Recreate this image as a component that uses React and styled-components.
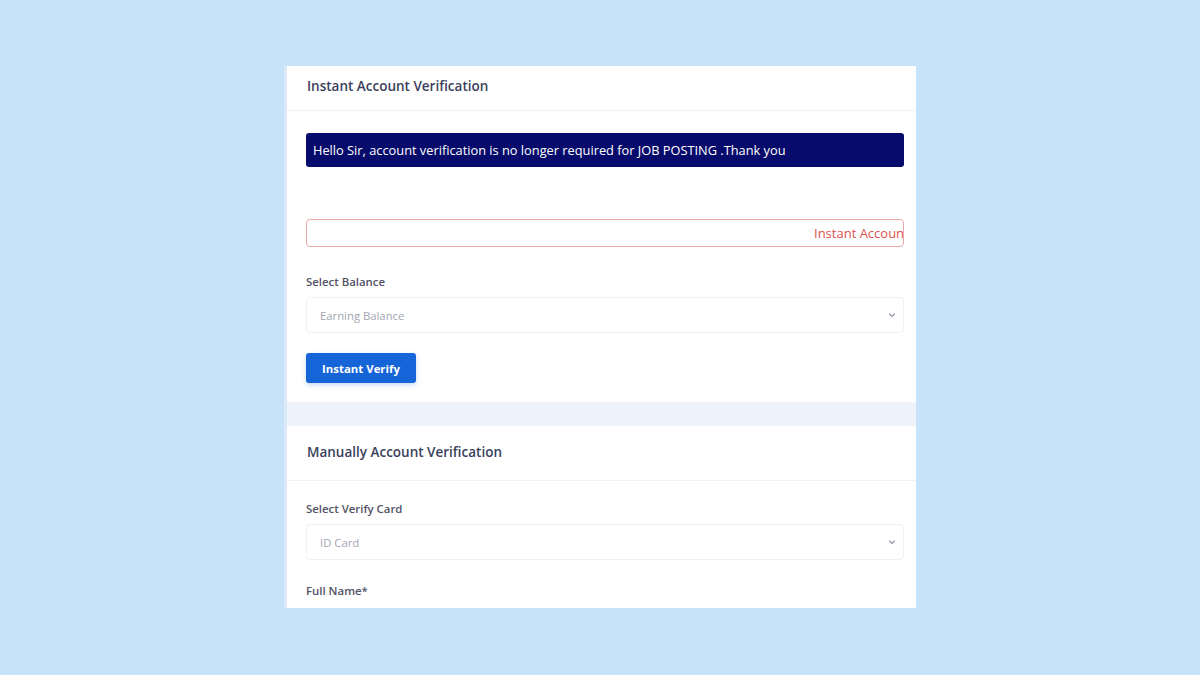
import React from 'react';
import styled, {createGlobalStyle} from 'styled-components';

const GlobalStyle = createGlobalStyle`
  html, body {
    margin: 0;
    padding: 0;
    background: #c6e3f9;
    font-family: "Open Sans", "Liberation Sans", sans-serif;
  }
`;

const Page = styled.div`
  width: 1200px;
  height: 675px;
  display: flex;
  justify-content: center;
  padding-top: 66px;
  box-sizing: border-box;
  overflow: hidden;
`;

const Card = styled.div`
  position: relative;
  width: 632px;
  height: 542px;
  background: #fff;
  border-left: 3px solid #dbe9f8;
  box-sizing: border-box;
  display: flex;
  flex-direction: column;
  overflow: hidden;

  &::before {
    content: '';
    position: absolute;
    left: -3px;
    top: 0;
    width: 3px;
    height: 7px;
    background: #3a7bd5;
  }
`;

const Section = styled.div`
  display: flex;
  flex-direction: column;
`;

const Header = styled.div`
  height: ${p => p.$tall ? 55 : 45}px;
  box-sizing: border-box;
  padding: 0 0 ${p => p.$tall ? 2 : 5}px 20px;
  display: flex;
  align-items: center;
  border-bottom: 1px solid #f1f2f5;
  color: #3b3f5c;
  font-size: 13.5px;
  font-weight: 600;
`;

const Body = styled.div`
  padding: ${p => p.$pad || '22px 12px 19px 19px'};
  display: flex;
  flex-direction: column;
`;

const Alert = styled.div`
  height: 34px;
  box-sizing: border-box;
  background: #070b6b;
  border-radius: 3px;
  color: #fff;
  font-size: 12.8px;
  display: flex;
  align-items: center;
  padding-left: 7px;
`;

const Marquee = styled.div`
  margin-top: 52px;
  height: 28px;
  box-sizing: border-box;
  border: 1px solid #e9a9a9;
  border-radius: 4px;
  overflow: hidden;
  display: flex;
  align-items: center;
`;

const MarqueeText = styled.span`
  padding-left: 507px;
  white-space: nowrap;
  color: #d9534f;
  font-size: 13px;
`;

const Label = styled.div`
  margin-top: ${p => p.$top || 27}px;
  color: #515365;
  font-size: 11.4px;
  font-weight: 600;
  line-height: 16px;
`;

const Select = styled.div`
  margin-top: 7px;
  height: 36px;
  box-sizing: border-box;
  border: 1px solid #f0f1f4;
  border-radius: 4px;
  display: flex;
  align-items: center;
  justify-content: space-between;
  padding: 0 6px 0 13px;
  color: #a3a6b2;
  font-size: 11.3px;
`;

const Chevron = () => (
  <svg width="10" height="10" viewBox="0 0 10 10">
    <path d="M2.5 4 L5 6.5 L7.5 4" fill="none" stroke="#9a9ca8" strokeWidth="1.2" strokeLinecap="round" strokeLinejoin="round"/>
  </svg>
);

const Button = styled.button`
  margin-top: 20px;
  align-self: flex-start;
  height: 30px;
  width: 110px;
  border: none;
  border-radius: 3px;
  background: #1565d8;
  color: #fff;
  font-family: inherit;
  font-size: 11.4px;
  font-weight: 700;
  box-shadow: 0 2px 5px rgba(21, 101, 216, 0.25);
`;

const Band = styled.div`
  height: 24px;
  flex-shrink: 0;
  background: #eef2fa;
`;

export default function App() {
  return (
    <Page>
      <GlobalStyle/>
      <Card>
        <Section>
          <Header>Instant Account Verification</Header>
          <Body>
            <Alert>Hello Sir, account verification is no longer required for JOB POSTING .Thank you</Alert>
            <Marquee>
              <MarqueeText>Instant Account Verification</MarqueeText>
            </Marquee>
            <Label>Select Balance</Label>
            <Select>
              <span>Earning Balance</span>
              <Chevron/>
            </Select>
            <Button>Instant Verify</Button>
          </Body>
        </Section>
        <Band/>
        <Section>
          <Header $tall>Manually Account Verification</Header>
          <Body $pad="0 12px 0 19px">
            <Label $top={20}>Select Verify Card</Label>
            <Select>
              <span>ID Card</span>
              <Chevron/>
            </Select>
            <Label $top={23}>Full Name*</Label>
          </Body>
        </Section>
      </Card>
    </Page>
  );
}
